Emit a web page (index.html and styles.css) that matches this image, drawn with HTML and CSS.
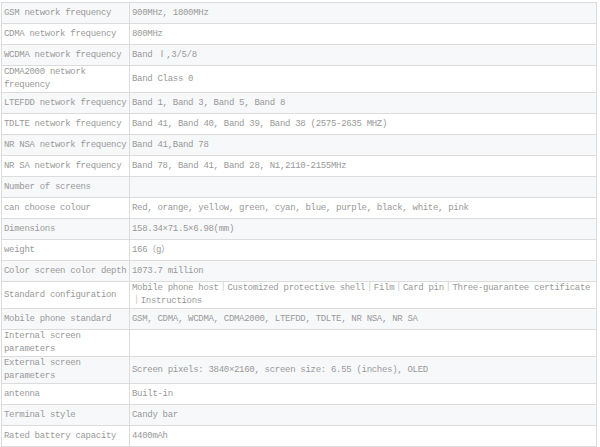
FILE: index.html
```html
<!DOCTYPE html>
<html lang="en">
<head>
  <meta charset="UTF-8" />
  <meta name="viewport" content="width=device-width, initial-scale=1.0"/>
  <title>Specifications</title>
  <link rel="stylesheet" href="styles.css">
</head>
<body>
  <!-- 参数表 -->
  <table class="spec-table">
    <colgroup>
      <col class="col-name">
      <col class="col-value">
    </colgroup>
    <tbody>
      <tr><td>GSM network frequency</td><td>900MHz, 1800MHz</td></tr>
      <tr><td>CDMA network frequency</td><td>800MHz</td></tr>
      <tr><td>WCDMA network frequency</td><td>Band Ⅰ,3/5/8</td></tr>
      <tr><td>CDMA2000 network frequency</td><td>Band Class 0</td></tr>
      <tr><td>LTEFDD network frequency</td><td>Band 1, Band 3, Band 5, Band 8</td></tr>
      <tr><td>TDLTE network frequency</td><td>Band 41, Band 40, Band 39, Band 38 (2575-2635 MHZ)</td></tr>
      <tr><td>NR NSA network frequency</td><td>Band 41,Band 78</td></tr>
      <tr><td>NR SA network frequency</td><td>Band 78, Band 41, Band 28, N1,2110-2155MHz</td></tr>
      <tr><td>Number of screens</td><td></td></tr>
      <tr><td>can choose colour</td><td>Red, orange, yellow, green, cyan, blue, purple, black, white, pink</td></tr>
      <tr><td>Dimensions</td><td>158.34×71.5×6.98(mm)</td></tr>
      <tr><td>weight</td><td>166（g）</td></tr>
      <tr><td>Color screen color depth</td><td>1073.7 million</td></tr>
      <tr><td>Standard configuration</td><td>Mobile phone host｜Customized protective shell｜Film｜Card pin｜Three-guarantee certificate<span class="nobr">｜Instructions</span></td></tr>
      <tr><td>Mobile phone standard</td><td>GSM, CDMA, WCDMA, CDMA2000, LTEFDD, TDLTE, NR NSA, NR SA</td></tr>
      <tr><td>Internal screen parameters</td><td></td></tr>
      <tr><td>External screen parameters</td><td>Screen pixels: 3840×2160, screen size: 6.55 (inches), OLED</td></tr>
      <tr><td>antenna</td><td>Built-in</td></tr>
      <tr><td>Terminal style</td><td>Candy bar</td></tr>
      <tr><td>Rated battery capacity</td><td>4400mAh</td></tr>
    </tbody>
  </table>
</body>
</html>
```

FILE: styles.css
```css
body {
  margin: 0;
  padding: 2px 0 0 1px;
  background-color: #fff;
  font-family: "Liberation Mono", "Noto Sans CJK SC", monospace;
  font-size: 9px;
  letter-spacing: -0.3px;
  color: #999;
}

.spec-table {
  width: 596px;
  border-collapse: collapse;
  table-layout: fixed;
  border: 1px solid #dcdcdc;
}

.col-name {
  width: 128px;
}

.spec-table tr:nth-child(odd) {
  background-color: #f7f8fa;
}

.spec-table td {
  height: 20px;
  padding: 0 1px 0 2px;
  line-height: 13px;
  border: 1px solid #dcdcdc;
  vertical-align: middle;
  word-wrap: break-word;
}

.nobr {
  white-space: nowrap;
}
```
